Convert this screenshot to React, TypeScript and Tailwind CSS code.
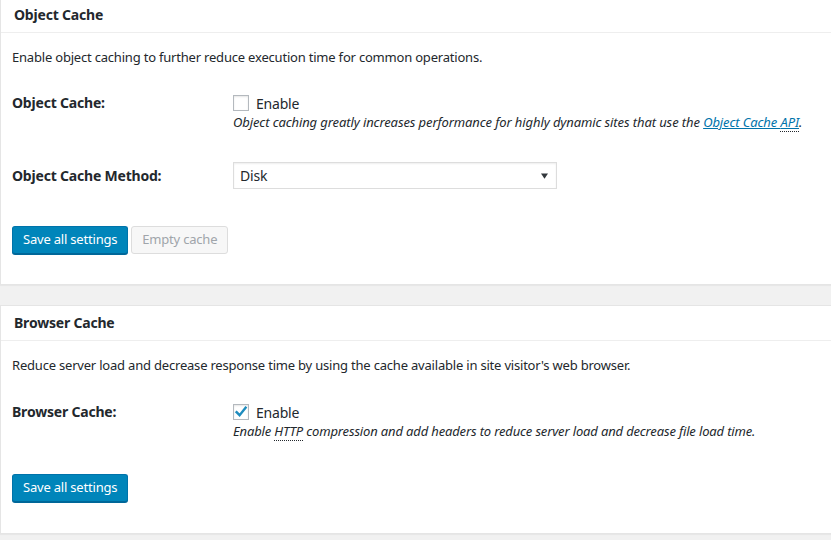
import React from 'react';

const font = { fontFamily: '"Noto Sans", "Open Sans", sans-serif' };

const Checkbox = ({ checked }: { checked?: boolean }) => (
  <span className="relative inline-flex h-4 w-4 shrink-0 items-center justify-center border border-[#b4b9be] bg-white shadow-[inset_0_1px_2px_rgba(0,0,0,0.1)]">
    {checked && (
      <svg viewBox="0 0 16 16" className="absolute -left-[1px] -top-[1px] h-4 w-4">
        <path d="M3.6 8.2 L6.6 11.2 L12.6 3.8" fill="none" stroke="#1e8cbe" strokeWidth="2.4" strokeLinecap="square" />
      </svg>
    )}
  </span>
);

const Header = ({ title }: { title: string }) => (
  <div className="flex h-[35px] items-center border-b border-[#eeeeee] px-[13px] pb-[2px] text-[14px] font-bold tracking-[-0.2px] text-[#23282d]">
    {title}
  </div>
);

const SaveButton = () => (
  <button className="h-[28px] rounded-[3px] border border-[#0073aa] border-b-[#006799] bg-[#0085ba] px-[10px] text-[13px] tracking-[-0.2px] text-white shadow-[0_1px_0_#006799]">
    Save all settings
  </button>
);

export default function App() {
  return (
    <div className="min-h-screen bg-[#f1f1f1] text-[#23282d]" style={font}>
      <div className="-mt-[3px] border border-r-0 border-[#e5e5e5] bg-white shadow-[0_1px_1px_rgba(0,0,0,0.04)]">
        <Header title="Object Cache" />
        <div className="flex flex-col px-[11px] pb-[30px] pt-[14px] text-[13px] tracking-[-0.2px]">
          <p className="leading-[20px]">Enable object caching to further reduce execution time for common operations.</p>
          <div className="mt-[26px] flex">
            <div className="w-[221px] shrink-0 text-[14px] font-bold leading-[20px]">Object Cache:</div>
            <div className="flex flex-col">
              <label className="flex h-[20px] items-center gap-[7px] text-[14px]">
                <Checkbox />
                Enable
              </label>
              <span className="text-[13px] italic leading-[19px] tracking-[-0.1px]">
                Object caching greatly increases performance for highly dynamic sites that use the{' '}
                <a className="text-[#0073aa] underline">
                  Object Cache <abbr className="border-b border-dotted border-[#23282d] no-underline">API</abbr>
                </a>
                .
              </span>
            </div>
          </div>
          <div className="mt-[30px] flex items-center">
            <div className="w-[221px] shrink-0 text-[14px] font-bold">Object Cache Method:</div>
            <div className="flex h-[27px] w-[324px] items-center justify-between border border-[#dddddd] bg-white pl-[6px] pr-[8px] text-[14px] shadow-[inset_0_1px_2px_rgba(0,0,0,0.07)]">
              <span>Disk</span>
              <svg viewBox="0 0 8 6" className="h-[6px] w-[7px]">
                <path d="M0 0 H8 L4 6 Z" fill="#32373c" />
              </svg>
            </div>
          </div>
          <div className="mt-[37px] flex gap-[3px]">
            <SaveButton />
            <button className="h-[28px] rounded-[3px] border border-[#dddddd] bg-[#f7f7f7] px-[10px] text-[13px] text-[#a0a5aa]">
              Empty cache
            </button>
          </div>
        </div>
      </div>

      <div className="mt-[20px] border border-r-0 border-[#e5e5e5] bg-white shadow-[0_1px_1px_rgba(0,0,0,0.04)]">
        <Header title="Browser Cache" />
        <div className="flex flex-col px-[11px] pb-[31px] pt-[14px] text-[13px] tracking-[-0.2px]">
          <p className="leading-[20px]">Reduce server load and decrease response time by using the cache available in site visitor's web browser.</p>
          <div className="mt-[27px] flex">
            <div className="w-[221px] shrink-0 text-[14px] font-bold leading-[20px]">Browser Cache:</div>
            <div className="flex flex-col">
              <label className="flex h-[20px] items-center gap-[7px] text-[14px]">
                <Checkbox checked />
                Enable
              </label>
              <span className="text-[13px] italic leading-[18px] tracking-[-0.15px]">
                Enable <abbr className="border-b border-dotted border-[#23282d] no-underline">HTTP</abbr> compression and add headers to reduce server load and decrease file load time.
              </span>
            </div>
          </div>
          <div className="mt-[34px] flex">
            <SaveButton />
          </div>
        </div>
      </div>
    </div>
  );
}
